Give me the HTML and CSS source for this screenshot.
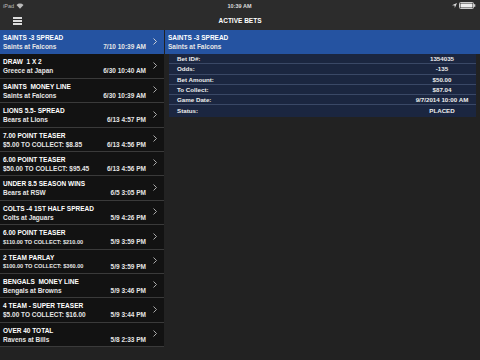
FILE: index.html
```html
<!DOCTYPE html>
<html lang="en">
<head>
    <meta charset="UTF-8">
    <meta name="viewport" content="width=device-width, initial-scale=1.0">
    <title>Active Bets</title>
    <link rel="stylesheet" href="styles.css">
</head>
<body>

<div class="status-bar">
    <div class="status-left">
        iPad
        <svg class="wifi" width="8" height="6" viewBox="0 0 8 6">
            <path d="M0.5 2 A5 5 0 0 1 7.5 2 L4 5.8 Z" fill="#bbb"/>
        </svg>
    </div>
    <div class="status-time">10:39 AM</div>
    <div class="status-right">
        <svg width="5" height="5" viewBox="0 0 5 5">
            <path d="M5 0 L0 2.2 L2.6 2.4 L2.8 5 Z" fill="#ddd"/>
        </svg>
        <svg width="17" height="7" viewBox="0 0 17 7">
            <rect x="0.5" y="0.5" width="14" height="6" rx="1" fill="none" stroke="#ccc"/>
            <rect x="1.5" y="1.5" width="12" height="4" fill="#eee"/>
            <rect x="15" y="2.2" width="1.3" height="2.6" fill="#ccc"/>
        </svg>
    </div>
</div>

<header class="nav-bar">
    <div class="menu-icon">
        <span></span><span></span><span></span>
    </div>
    <div class="nav-title">ACTIVE BETS</div>
</header>

<main class="split">
    <ul class="bet-list">
        <li class="bet selected">
            <div class="bet-title">SAINTS -3 SPREAD</div>
            <div class="bet-sub">Saints at Falcons</div>
            <div class="bet-date">7/10 10:39 AM</div>
            <div class="chevron"><svg width="4" height="7" viewBox="0 0 4 7"><polyline points="0.5,0.5 3.5,3.5 0.5,6.5" fill="none" stroke="#ddd" stroke-width="0.9"/></svg></div>
        </li>
        <li class="bet">
            <div class="bet-title">DRAW &nbsp;1 X 2</div>
            <div class="bet-sub">Greece at Japan</div>
            <div class="bet-date">6/30 10:40 AM</div>
            <div class="chevron"><svg width="4" height="7" viewBox="0 0 4 7"><polyline points="0.5,0.5 3.5,3.5 0.5,6.5" fill="none" stroke="#bbb" stroke-width="0.9"/></svg></div>
        </li>
        <li class="bet">
            <div class="bet-title">SAINTS &nbsp;MONEY LINE</div>
            <div class="bet-sub">Saints at Falcons</div>
            <div class="bet-date">6/30 10:39 AM</div>
            <div class="chevron"><svg width="4" height="7" viewBox="0 0 4 7"><polyline points="0.5,0.5 3.5,3.5 0.5,6.5" fill="none" stroke="#bbb" stroke-width="0.9"/></svg></div>
        </li>
        <li class="bet">
            <div class="bet-title">LIONS 5.5- SPREAD</div>
            <div class="bet-sub">Bears at Lions</div>
            <div class="bet-date">6/13 4:57 PM</div>
            <div class="chevron"><svg width="4" height="7" viewBox="0 0 4 7"><polyline points="0.5,0.5 3.5,3.5 0.5,6.5" fill="none" stroke="#bbb" stroke-width="0.9"/></svg></div>
        </li>
        <li class="bet">
            <div class="bet-title">7.00 POINT TEASER</div>
            <div class="bet-sub">$5.00 TO COLLECT: $8.85</div>
            <div class="bet-date">6/13 4:56 PM</div>
            <div class="chevron"><svg width="4" height="7" viewBox="0 0 4 7"><polyline points="0.5,0.5 3.5,3.5 0.5,6.5" fill="none" stroke="#bbb" stroke-width="0.9"/></svg></div>
        </li>
        <li class="bet">
            <div class="bet-title">6.00 POINT TEASER</div>
            <div class="bet-sub">$50.00 TO COLLECT: $95.45</div>
            <div class="bet-date">6/13 4:56 PM</div>
            <div class="chevron"><svg width="4" height="7" viewBox="0 0 4 7"><polyline points="0.5,0.5 3.5,3.5 0.5,6.5" fill="none" stroke="#bbb" stroke-width="0.9"/></svg></div>
        </li>
        <li class="bet">
            <div class="bet-title">UNDER 8.5 SEASON WINS</div>
            <div class="bet-sub">Bears at RSW</div>
            <div class="bet-date">6/5 3:05 PM</div>
            <div class="chevron"><svg width="4" height="7" viewBox="0 0 4 7"><polyline points="0.5,0.5 3.5,3.5 0.5,6.5" fill="none" stroke="#bbb" stroke-width="0.9"/></svg></div>
        </li>
        <li class="bet">
            <div class="bet-title">COLTS -4 1ST HALF SPREAD</div>
            <div class="bet-sub">Colts at Jaguars</div>
            <div class="bet-date">5/9 4:26 PM</div>
            <div class="chevron"><svg width="4" height="7" viewBox="0 0 4 7"><polyline points="0.5,0.5 3.5,3.5 0.5,6.5" fill="none" stroke="#bbb" stroke-width="0.9"/></svg></div>
        </li>
        <li class="bet">
            <div class="bet-title">6.00 POINT TEASER</div>
            <div class="bet-sub small">$110.00 TO COLLECT: $210.00</div>
            <div class="bet-date">5/9 3:59 PM</div>
            <div class="chevron"><svg width="4" height="7" viewBox="0 0 4 7"><polyline points="0.5,0.5 3.5,3.5 0.5,6.5" fill="none" stroke="#bbb" stroke-width="0.9"/></svg></div>
        </li>
        <li class="bet">
            <div class="bet-title">2 TEAM PARLAY</div>
            <div class="bet-sub small">$100.00 TO COLLECT: $360.00</div>
            <div class="bet-date">5/9 3:59 PM</div>
            <div class="chevron"><svg width="4" height="7" viewBox="0 0 4 7"><polyline points="0.5,0.5 3.5,3.5 0.5,6.5" fill="none" stroke="#bbb" stroke-width="0.9"/></svg></div>
        </li>
        <li class="bet">
            <div class="bet-title">BENGALS &nbsp;MONEY LINE</div>
            <div class="bet-sub">Bengals at Browns</div>
            <div class="bet-date">5/9 3:46 PM</div>
            <div class="chevron"><svg width="4" height="7" viewBox="0 0 4 7"><polyline points="0.5,0.5 3.5,3.5 0.5,6.5" fill="none" stroke="#bbb" stroke-width="0.9"/></svg></div>
        </li>
        <li class="bet">
            <div class="bet-title">4 TEAM - SUPER TEASER</div>
            <div class="bet-sub">$5.00 TO COLLECT: $16.00</div>
            <div class="bet-date">5/9 3:44 PM</div>
            <div class="chevron"><svg width="4" height="7" viewBox="0 0 4 7"><polyline points="0.5,0.5 3.5,3.5 0.5,6.5" fill="none" stroke="#bbb" stroke-width="0.9"/></svg></div>
        </li>
        <li class="bet">
            <div class="bet-title">OVER 40 TOTAL</div>
            <div class="bet-sub">Ravens at Bills</div>
            <div class="bet-date">5/8 2:33 PM</div>
            <div class="chevron"><svg width="4" height="7" viewBox="0 0 4 7"><polyline points="0.5,0.5 3.5,3.5 0.5,6.5" fill="none" stroke="#bbb" stroke-width="0.9"/></svg></div>
        </li>
    </ul>

    <section class="detail">
        <div class="detail-header">
            <div class="bet-title">SAINTS -3 SPREAD</div>
            <div class="bet-sub">Saints at Falcons</div>
        </div>
        <div class="detail-table">
            <div class="detail-row"><span>Bet ID#:</span><span class="value">1354035</span></div>
            <div class="detail-row"><span>Odds:</span><span class="value">-135</span></div>
            <div class="detail-row"><span>Bet Amount:</span><span class="value">$50.00</span></div>
            <div class="detail-row"><span>To Collect:</span><span class="value">$87.04</span></div>
            <div class="detail-row"><span>Game Date:</span><span class="value">9/7/2014 10:00 AM</span></div>
            <div class="detail-row"><span>Status:</span><span class="value">PLACED</span></div>
        </div>
    </section>
</main>

</body>
</html>
```

FILE: styles.css
```css
body {
    margin: 0;
    padding: 0;
    width: 480px;
    height: 360px;
    overflow: hidden;
    background-color: #222222;
    font-family: "Liberation Sans", Arial, sans-serif;
    color: #ffffff;
}

.status-bar {
    height: 15px;
    background-color: #2c2c2c;
    display: flex;
    align-items: center;
    justify-content: space-between;
    padding: 0 4px 4px 3px;
    box-sizing: border-box;
    font-size: 5.5px;
    color: #bbbbbb;
}

.status-left {
    display: flex;
    align-items: center;
    gap: 2px;
    width: 60px;
}

.status-time {
    font-weight: bold;
    color: #dddddd;
}

.status-right {
    display: flex;
    align-items: center;
    justify-content: flex-end;
    gap: 2px;
    width: 60px;
}

.nav-bar {
    height: 15px;
    background-color: #2c2c2c;
    display: flex;
    align-items: center;
    position: relative;
}

.menu-icon {
    display: flex;
    flex-direction: column;
    gap: 1.5px;
    margin-left: 13px;
    margin-top: -3px;
}

.menu-icon span {
    display: block;
    width: 9px;
    height: 1.6px;
    background-color: #dddddd;
}

.nav-title {
    position: absolute;
    left: 0;
    right: 0;
    top: 2px;
    text-align: center;
    font-size: 6.5px;
    font-weight: bold;
}

.split {
    display: flex;
    height: 330px;
}

.bet-list {
    list-style: none;
    margin: 0;
    padding: 0;
    width: 164px;
    align-self: flex-start;
    background-color: #121212;
}

.bet {
    height: 24.4px;
    box-sizing: border-box;
    padding: 3px 0 0 3px;
    display: grid;
    grid-template-columns: 1fr auto 18px;
    grid-template-rows: 9px 9px;
    align-items: center;
    border-bottom: 1px solid #3a3a3a;
}

.bet.selected {
    background-color: #2553a1;
    border-bottom-color: #2553a1;
}

.bet-title {
    grid-column: 1 / 3;
    font-size: 6.5px;
    font-weight: bold;
    white-space: nowrap;
}

.bet-sub {
    font-size: 6.5px;
    font-weight: bold;
    color: #e6e6e6;
    white-space: nowrap;
}

.bet-sub.small {
    font-size: 5.6px;
}

.bet-date {
    font-size: 6.5px;
    font-weight: bold;
    color: #e6e6e6;
    text-align: right;
}

.chevron {
    grid-column: 3;
    grid-row: 1 / 3;
    display: flex;
    justify-content: center;
    margin-top: -2px;
}

.detail {
    flex: 1;
    margin-left: 1px;
    background-color: #222222;
}

.detail-header {
    height: 24px;
    box-sizing: border-box;
    padding: 3px 3px 0 3px;
    background-color: #2553a1;
    display: grid;
    grid-template-rows: 9px 9px;
    align-items: center;
}

.detail-table {
    margin: 0 4px 0 4px;
    background-color: #1b2640;
    padding-bottom: 1px;
}

.detail-row {
    height: 10.3px;
    box-sizing: border-box;
    display: grid;
    grid-template-columns: 1fr 66px;
    align-items: center;
    padding: 0 1px 0 8px;
    font-size: 6.2px;
    font-weight: bold;
    color: #eeeeee;
    border-bottom: 1px solid #3a4866;
}

.detail-row:last-child {
    border-bottom: none;
}

.detail-row .value {
    text-align: center;
    white-space: nowrap;
}
```
